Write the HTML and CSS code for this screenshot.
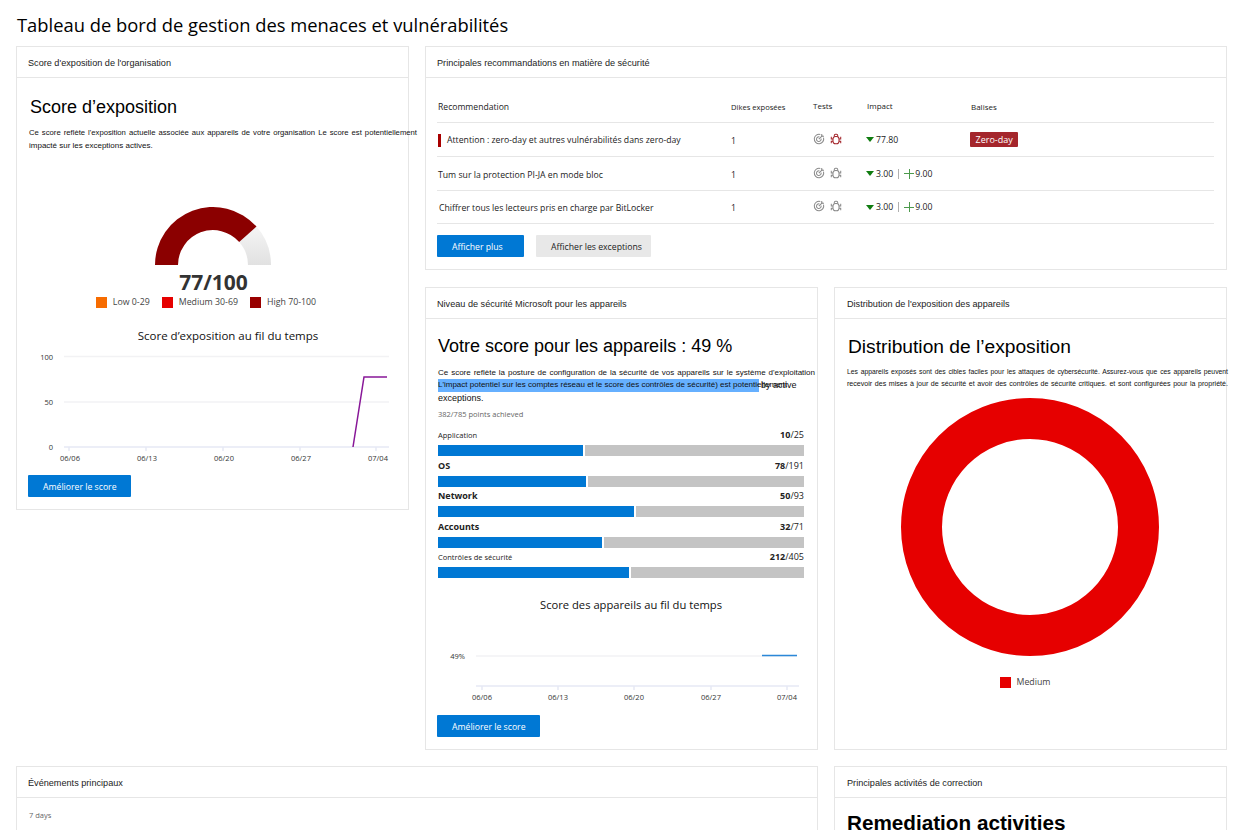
FILE: index.html
```html
<!DOCTYPE html>
<html lang="fr">
<head>
  <meta charset="UTF-8">
  <title>Tableau de bord de gestion des menaces et vulnérabilités</title>
  <link rel="stylesheet" href="styles.css">
</head>
<body>
  <h1 class="page-title">Tableau de bord de gestion des menaces et vulnérabilités</h1>

  <div class="dashboard">
    <!-- Exposure score -->
    <section class="card card-exposure">
      <div class="card-header">Score d'exposition de l'organisation</div>
      <div class="card-body">
        <h2 class="big-title">Score d’exposition</h2>
        <p class="desc desc-exposure"><span class="line">Ce score reflète l'exposition actuelle associée aux appareils de votre organisation Le score est potentiellement</span><span class="line-end">impacté sur les exceptions actives.</span></p>
        <svg class="gauge" width="118" height="60" viewBox="0 0 118 60">
          <defs>
            <linearGradient id="gaugeRest" x1="0" y1="0" x2="0" y2="1">
              <stop offset="0" stop-color="#f5f5f5"/>
              <stop offset="1" stop-color="#e1e1e1"/>
            </linearGradient>
          </defs>
          <path d="M102.500 20.600A58 58 0 0 1 117 59H94A35 35 0 0 0 85.200 35.900Z" fill="url(#gaugeRest)"/>
          <path d="M1 59A58 58 0 0 1 102.500 20.600L85.200 35.900A35 35 0 0 0 24 59Z" fill="#8b0000"/>
        </svg>
        <div class="gauge-value">77/100</div>
        <div class="legend">
          <span class="legend-item"><i class="swatch swatch-low"></i>Low 0-29</span>
          <span class="legend-item"><i class="swatch swatch-medium"></i>Medium 30-69</span>
          <span class="legend-item"><i class="swatch swatch-high"></i>High 70-100</span>
        </div>
        <div class="chart-title">Score d’exposition au fil du temps</div>
        <svg class="chart" width="392" height="122" viewBox="0 0 392 122">
          <g class="grid-line">
            <line x1="47" y1="5.500" x2="372" y2="5.500"/>
            <line x1="47" y1="51" x2="372" y2="51"/>
          </g>
          <g class="axis-line">
            <line x1="47" y1="96" x2="372" y2="96"/>
            <line x1="52" y1="96" x2="52" y2="100"/>
            <line x1="129" y1="96" x2="129" y2="100"/>
            <line x1="206" y1="96" x2="206" y2="100"/>
            <line x1="283" y1="96" x2="283" y2="100"/>
            <line x1="359" y1="96" x2="359" y2="100"/>
          </g>
          <g class="tick" text-anchor="end">
            <text x="36" y="9">100</text>
            <text x="36" y="54">50</text>
            <text x="36" y="99">0</text>
          </g>
          <g class="tick" text-anchor="middle">
            <text x="53" y="110">06/06</text>
            <text x="130" y="110">06/13</text>
            <text x="207" y="110">06/20</text>
            <text x="284" y="110">06/27</text>
            <text x="361" y="110">07/04</text>
          </g>
          <polyline points="336,96 347,26 370,26" fill="none" stroke="#881798" stroke-width="1.500"/>
        </svg>
        <button class="btn btn-primary btn-score">Améliorer le score</button>
      </div>
    </section>

    <!-- Top recommendations -->
    <section class="card card-reco">
      <div class="card-header">Principales recommandations en matière de sécurité</div>
      <div class="card-body card-body-reco">
        <table class="reco-table">
          <thead>
            <tr>
              <th class="col-name">Recommendation</th>
              <th class="col-dikes">Dikes exposées</th>
              <th class="col-tests">Tests</th>
              <th class="col-impact">Impact</th>
              <th class="col-tags">Balises</th>
            </tr>
          </thead>
          <tbody>
            <tr>
              <td class="reco-name"><i class="flag"></i>Attention : zero-day et autres vulnérabilités dans zero-day</td>
              <td>1</td>
              <td>
                <div class="icons">
                  <svg class="ico"><use href="#ico-target"/></svg>
                  <svg class="ico ico-alert"><use href="#ico-bug"/></svg>
                </div>
              </td>
              <td><span class="impact"><i class="arrow"></i>77.80</span></td>
              <td><span class="tag">Zero-day</span></td>
            </tr>
            <tr>
              <td class="reco-name">Tum sur la protection PI-JA en mode bloc</td>
              <td>1</td>
              <td>
                <div class="icons">
                  <svg class="ico"><use href="#ico-target"/></svg>
                  <svg class="ico"><use href="#ico-bug"/></svg>
                </div>
              </td>
              <td><span class="impact"><i class="arrow"></i>3.00<i class="sep"></i><i class="plus"></i>9.00</span></td>
              <td></td>
            </tr>
            <tr class="row-last">
              <td class="reco-name reco-last">Chiffrer tous les lecteurs pris en charge par BitLocker</td>
              <td>1</td>
              <td>
                <div class="icons">
                  <svg class="ico"><use href="#ico-target"/></svg>
                  <svg class="ico"><use href="#ico-bug"/></svg>
                </div>
              </td>
              <td><span class="impact"><i class="arrow"></i>3.00<i class="sep"></i><i class="plus"></i>9.00</span></td>
              <td></td>
            </tr>
          </tbody>
        </table>
        <div class="actions">
          <button class="btn btn-primary btn-more">Afficher plus</button>
          <button class="btn btn-light">Afficher les exceptions</button>
        </div>
      </div>
    </section>

    <!-- Secure score -->
    <section class="card card-secure">
      <div class="card-header">Niveau de sécurité Microsoft pour les appareils</div>
      <div class="card-body">
        <h2 class="big-title">Votre score pour les appareils : 49 %</h2>
        <p class="desc desc-secure"><span class="line">Ce score reflète la posture de configuration de la sécurité de vos appareils sur le système d'exploitation</span><span class="line-selected"><span class="selected">L'impact potentiel sur les comptes réseau et le score des contrôles de sécurité) est potentiellement</span><span class="after-selected">by active</span></span><span class="line-end">exceptions.</span></p>
        <div class="points">382/785 points achieved</div>

        <div class="score-row">
          <div class="score-label"><span class="small-name">Application</span><span><b>10</b>/25</span></div>
          <div class="bar"><div class="bar-fill" style="width: 39.600%"></div></div>
        </div>
        <div class="score-row">
          <div class="score-label"><b>OS</b><span><b>78</b>/191</span></div>
          <div class="bar"><div class="bar-fill" style="width: 40.400%"></div></div>
        </div>
        <div class="score-row">
          <div class="score-label"><b>Network</b><span><b>50</b>/93</span></div>
          <div class="bar"><div class="bar-fill" style="width: 53.500%"></div></div>
        </div>
        <div class="score-row">
          <div class="score-label"><b>Accounts</b><span><b>32</b>/71</span></div>
          <div class="bar"><div class="bar-fill" style="width: 44.800%"></div></div>
        </div>
        <div class="score-row">
          <div class="score-label"><span class="small-name">Contrôles de sécurité</span><span><b>212</b>/405</span></div>
          <div class="bar"><div class="bar-fill" style="width: 52.200%"></div></div>
        </div>

        <div class="chart-title chart-title-secure">Score des appareils au fil du temps</div>
        <svg class="chart" width="392" height="100" viewBox="0 0 392 100">
          <line class="grid-line" x1="50" y1="47" x2="371" y2="47"/>
          <line x1="336" y1="46.500" x2="371" y2="46.500" stroke="#2b88d8" stroke-width="1.500"/>
          <g class="axis-line">
            <line x1="50" y1="77" x2="373" y2="77"/>
            <line x1="56" y1="77" x2="56" y2="81"/>
            <line x1="132" y1="77" x2="132" y2="81"/>
            <line x1="208" y1="77" x2="208" y2="81"/>
            <line x1="285" y1="77" x2="285" y2="81"/>
            <line x1="361" y1="77" x2="361" y2="81"/>
          </g>
          <g class="tick">
            <text x="39" y="50" text-anchor="end">49%</text>
          </g>
          <g class="tick" text-anchor="middle">
            <text x="56" y="91">06/06</text>
            <text x="132" y="91">06/13</text>
            <text x="208" y="91">06/20</text>
            <text x="285" y="91">06/27</text>
            <text x="361" y="91">07/04</text>
          </g>
        </svg>
        <button class="btn btn-primary btn-score">Améliorer le score</button>
      </div>
    </section>

    <!-- Exposure distribution -->
    <section class="card card-distribution">
      <div class="card-header">Distribution de l'exposition des appareils</div>
      <div class="card-body">
        <h2 class="big-title">Distribution de l’exposition</h2>
        <p class="desc desc-distribution"><span class="line">Les appareils exposés sont des cibles faciles pour les attaques de cybersécurité. Assurez-vous que ces appareils peuvent</span><span class="line">recevoir des mises à jour de sécurité et avoir des contrôles de sécurité critiques. et sont configurées pour la propriété.</span></p>
        <svg class="donut" width="258" height="260" viewBox="0 0 258 260">
          <circle cx="129" cy="130" r="108.500" fill="none" stroke="#e60000" stroke-width="41"/>
        </svg>
        <div class="legend legend-donut">
          <span class="legend-item"><i class="swatch swatch-medium"></i>Medium</span>
        </div>
      </div>
    </section>

    <!-- Bottom row, cut off by the window -->
    <section class="card card-events">
      <div class="card-header">Événements principaux</div>
      <div class="card-body">
        <div class="points">7 days</div>
      </div>
    </section>

    <section class="card card-remediation">
      <div class="card-header">Principales activités de correction</div>
      <div class="card-body">
        <h2 class="remediation-title">Remediation activities</h2>
      </div>
    </section>
  </div>

  <!-- Shared icons -->
  <svg class="sprite" width="0" height="0">
    <symbol id="ico-target" viewBox="0 0 14 14">
      <g fill="none" stroke="currentColor" stroke-width="1.200">
        <path d="M8.500 1.700A5.500 5.500 0 1 0 12.300 5.500"/>
        <path d="M7.500 4.600A2.700 2.700 0 1 0 9.400 6.500"/>
        <path d="M6.800 7.200L11 3"/>
        <path d="M10.200 1.200V3.800H12.800"/>
      </g>
    </symbol>
    <symbol id="ico-bug" viewBox="0 0 14 14">
      <g fill="none" stroke="currentColor" stroke-width="1.200">
        <rect x="3.500" y="4" width="7" height="8.500" rx="3"/>
        <path d="M5 4.500V3A1.500 1.500 0 0 1 6.500 1.500H7.500A1.500 1.500 0 0 1 9 3V4.500"/>
        <path d="M3.500 7H1.500V4.500M10.500 7H12.500V4.500M3.500 9.500H1.500V12M10.500 9.500H12.500V12"/>
      </g>
    </symbol>
  </svg>
</body>
</html>
```

FILE: styles.css
```css
/* General Reset */
html, body {
  height: 830px;
  overflow: hidden;
}

body, h1, h2, p {
  margin: 0;
  padding: 0;
}

body {
  font-family: 'Open Sans', 'Liberation Sans', sans-serif;
  color: #111;
  background: #fff;
}

.page-title {
  font-size: 18.350px;
  font-weight: 400;
  line-height: 24px;
  padding: 13px 0 0 17px;
  height: 33px;
  color: #000;
}

/* Grid */
.dashboard {
  display: grid;
  grid-template-columns: 393px 393px 393px;
  grid-template-rows: 224px 463px 64px;
  column-gap: 16px;
  row-gap: 16.500px;
  padding-left: 16px;
}

.card {
  border: 1px solid #e6e6e6;
  box-sizing: border-box;
  background: #fff;
  min-width: 0;
}

.card-exposure { grid-column: 1; grid-row: 1 / 3; height: 464px; }
.card-reco { grid-column: 2 / 4; grid-row: 1; }
.card-secure { grid-column: 2; grid-row: 2; }
.card-distribution { grid-column: 3; grid-row: 2; }
.card-events { grid-column: 1 / 3; grid-row: 3; overflow: hidden; border-bottom: none; }
.card-remediation { grid-column: 3; grid-row: 3; overflow: hidden; border-bottom: none; }

.card-header {
  height: 30px;
  line-height: 33px;
  padding-left: 11px;
  font-family: 'Liberation Sans', sans-serif;
  font-size: 9.150px;
  border-bottom: 1px solid #e6e6e6;
  color: #222;
}

.card-distribution .card-header,
.card-remediation .card-header {
  padding-left: 12px;
}

.card-body {
  padding: 16px 12px 0 12px;
}

.big-title {
  font-family: 'Liberation Sans', sans-serif;
  font-weight: 400;
  font-size: 18px;
  line-height: 24px;
  color: #000;
}

.desc {
  font-family: 'Liberation Sans', sans-serif;
  font-size: 8px;
  line-height: 13px;
  color: #111;
}

.line, .line-end, .line-selected {
  display: block;
  white-space: nowrap;
}

.line {
  text-align: justify;
  text-align-last: justify;
  white-space: normal;
}

/* Exposure card */
.card-exposure .card-body {
  padding-top: 17px;
}

.card-exposure .big-title {
  padding-left: 1px;
}

.desc-exposure {
  width: 388px;
  margin-top: 7px;
}

.desc-exposure .line {
  font-size: 7.700px;
}

.gauge {
  display: block;
  margin: 54px 0 0 125px;
}

.gauge-value {
  font-weight: 700;
  font-size: 21px;
  line-height: 24px;
  color: #333;
  text-align: center;
  margin-top: 4px;
  width: 369px;
}

.legend {
  display: flex;
  justify-content: center;
  gap: 12px;
  font-size: 8.800px;
  color: #444;
  width: 354px;
  margin-top: 3px;
}

.legend-item {
  display: flex;
  align-items: center;
  gap: 6px;
  line-height: 11px;
}

.swatch {
  display: block;
  width: 11px;
  height: 11px;
}

.swatch-low { background: #f76c00; }
.swatch-medium { background: #e60000; }
.swatch-high { background: #990000; }

.chart-title {
  font-size: 11.500px;
  line-height: 16px;
  text-align: center;
  color: #111;
  padding-left: 27px;
  width: 344px;
  margin-top: 20px;
}

.chart {
  display: block;
  margin-left: -12px;
}

.card-exposure .chart {
  margin-top: 7px;
}

.grid-line, .grid-line line {
  stroke: #f2f2f4;
  stroke-width: 1.500;
}

.axis-line line {
  stroke: #e6e8f4;
  stroke-width: 1.500;
}

.tick text {
  font-size: 7.500px;
  fill: #333;
}

/* Buttons */
.btn {
  display: block;
  height: 22px;
  margin-left: -1px;
  border: none;
  border-radius: 1px;
  padding: 2px 0 0 15px;
  text-align: left;
  font-family: 'Open Sans', sans-serif;
  font-size: 8.700px;
  cursor: pointer;
}

.btn-primary {
  background: #0078d4;
  color: #fff;
}

.btn-light {
  background: #e8e8e8;
  color: #222;
  width: 115px;
  margin-left: 0;
}

.btn-score { width: 103px; }
.btn-more { width: 87px; margin-left: 0; }

.card-exposure .btn-score { margin-top: 2px; }
.card-secure .btn-score { margin-top: 6px; }

/* Recommendations */
.card-body-reco {
  padding: 0 12px 0 11px;
}

.reco-table {
  width: 777px;
  border-collapse: collapse;
  table-layout: fixed;
  font-size: 8.700px;
  color: #222;
}

.reco-table th {
  font-weight: 400;
  text-align: left;
  height: 30px;
  padding: 14px 0 0 1px;
  font-size: 8px;
  border-bottom: 1px solid #e6e6e6;
}

.reco-table td {
  height: 31px;
  padding: 2px 0 0 1px;
  border-bottom: 1px solid #e6e6e6;
}

.reco-table .row-last td {
  height: 30px;
}

.reco-table .col-name { width: 292px; font-size: 8.600px; }
.reco-table .col-dikes { width: 81px; font-size: 7.600px; }
.reco-table .col-tests { width: 53px; padding-top: 11px; }
.reco-table .col-impact { width: 103px; padding-top: 11px; }
.reco-table .col-tags { padding-top: 12px; }

.reco-name {
  white-space: nowrap;
}

.reco-table .reco-last {
  padding-left: 2px;
}

.flag {
  display: inline-block;
  width: 3px;
  height: 13px;
  background: #a80000;
  margin-right: 6px;
  vertical-align: middle;
}

.icons {
  display: flex;
  gap: 5px;
  color: #8a8a8a;
  margin-bottom: 4px;
}

.ico {
  width: 12px;
  height: 12px;
}

.ico-alert {
  color: #a4262c;
}

.impact {
  display: flex;
  align-items: center;
  font-size: 8.700px;
  margin: 0 0 2px -1px;
}

.arrow {
  display: block;
  width: 0;
  height: 0;
  border-left: 4px solid transparent;
  border-right: 4px solid transparent;
  border-top: 5px solid #107c10;
  margin-right: 2px;
}

.sep {
  display: block;
  width: 1px;
  height: 10px;
  background: #b0b0b0;
  margin: 0 5px;
}

/* Thin green plus, drawn so its arms can be longer than a glyph's */
.plus {
  display: block;
  width: 10px;
  height: 10px;
  margin-right: 1px;
  background:
    linear-gradient(#4c9a4c, #4c9a4c) center / 100% 1px no-repeat,
    linear-gradient(#4c9a4c, #4c9a4c) center / 1px 100% no-repeat;
}

.tag {
  display: inline-block;
  background: #a4262c;
  color: #fff;
  padding: 0 5.500px;
  margin: 0 0 2px -1px;
  line-height: 15px;
  border-radius: 1px;
  font-size: 9px;
}

.actions {
  display: flex;
  gap: 12px;
  margin-top: 11px;
}

/* Secure score card */
.card-secure .card-body {
  padding-top: 15px;
}

.desc-secure {
  width: 377px;
  margin-top: 9px;
  line-height: 12.500px;
}

.line-selected {
  display: flex;
}

.selected {
  background: #66b0ff;
  width: 321px;
  flex: none;
}

.after-selected {
  margin-left: 2px;
  font-size: 9px;
}

.line-end {
  font-size: 8px;
}

.desc-secure .line-end {
  font-size: 9px;
}

.points {
  font-size: 7.500px;
  line-height: 12px;
  color: #666;
  margin-top: 4px;
}

.card-secure .points { margin-bottom: 6px; }
.card-events .card-body { padding-top: 5px; }
.card-events .points { margin-top: 6px; }

.score-row {
  width: 366px;
  height: 30.500px;
}

.score-label {
  display: flex;
  justify-content: space-between;
  align-items: center;
  font-size: 9px;
  height: 19px;
  padding-bottom: 2px;
  box-sizing: border-box;
  color: #222;
}

.small-name {
  font-size: 7.500px;
}

.bar {
  height: 11px;
  background: #c4c4c4;
}

.bar-fill {
  height: 100%;
  background: #0078d4;
  border-right: 2px solid #fff;
}

.chart-title-secure {
  font-size: 11.200px;
  padding-left: 20px;
  width: 346px;
  margin-top: 18px;
}

.card-secure .chart {
  margin-top: -4px;
}

/* Distribution card */
.card-distribution .big-title {
  font-size: 19.200px;
  padding-left: 1px;
}

.desc-distribution {
  width: 381px;
  font-size: 7.100px;
  margin-top: 6px;
}

.desc-distribution .line:first-child {
  font-size: 6.800px;
}

.donut {
  display: block;
  margin: 6px 0 0 54px;
}

.legend-donut {
  width: 356px;
  margin-top: 20px;
}

.remediation-title {
  font-family: 'Liberation Sans', sans-serif;
  font-weight: 700;
  font-size: 20.700px;
  line-height: 24px;
  color: #000;
}

.card-remediation .card-body {
  padding-top: 13px;
}

.sprite {
  position: absolute;
}
```
